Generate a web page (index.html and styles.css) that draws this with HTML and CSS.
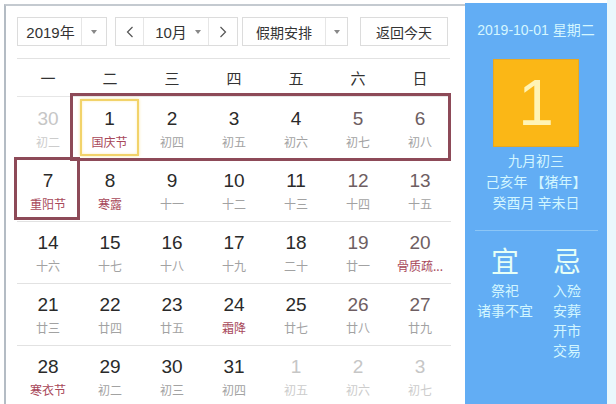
FILE: index.html
```html
<!DOCTYPE html>
<html lang="zh">
<head>
<meta charset="utf-8">
<link rel="stylesheet" href="styles.css">
</head>
<body>
<div class="page">
  <div class="left">
    <div class="toolbar">
      <div class="sel sel-year"><span class="sel-text">2019年</span><span class="sel-arrow"><i class="tri"></i></span></div>
      <div class="month">
        <span class="nav"><svg width="8" height="12" viewBox="0 0 8 12"><path d="M6.5 1 L1.5 6 L6.5 11" fill="none" stroke="#555" stroke-width="1.2"/></svg></span>
        <span class="month-text">10月<i class="tri"></i></span>
        <span class="nav"><svg width="8" height="12" viewBox="0 0 8 12"><path d="M1.5 1 L6.5 6 L1.5 11" fill="none" stroke="#555" stroke-width="1.2"/></svg></span>
      </div>
      <div class="sel sel-hol"><span class="sel-text">假期安排</span><span class="sel-arrow"><i class="tri"></i></span></div>
      <div class="btn">返回今天</div>
    </div>
    <div class="weekdays">
      <span>一</span><span>二</span><span>三</span><span>四</span><span>五</span><span>六</span><span>日</span>
    </div>
    <div class="grid">
      <div class="cell other"><b>30</b><em>初二</em></div>
      <div class="cell selected"><b>1</b><em class="fest">国庆节</em></div>
      <div class="cell"><b>2</b><em>初四</em></div>
      <div class="cell"><b>3</b><em>初五</em></div>
      <div class="cell"><b>4</b><em>初六</em></div>
      <div class="cell wk"><b>5</b><em>初七</em></div>
      <div class="cell wk"><b>6</b><em>初八</em></div>

      <div class="cell row"><b>7</b><em class="fest">重阳节</em></div>
      <div class="cell row"><b>8</b><em class="fest">寒露</em></div>
      <div class="cell row"><b>9</b><em>十一</em></div>
      <div class="cell row"><b>10</b><em>十二</em></div>
      <div class="cell row"><b>11</b><em>十三</em></div>
      <div class="cell row wk"><b>12</b><em>十四</em></div>
      <div class="cell row wk"><b>13</b><em>十五</em></div>

      <div class="cell row line"><b>14</b><em>十六</em></div>
      <div class="cell row line"><b>15</b><em>十七</em></div>
      <div class="cell row line"><b>16</b><em>十八</em></div>
      <div class="cell row line"><b>17</b><em>十九</em></div>
      <div class="cell row line"><b>18</b><em>二十</em></div>
      <div class="cell row line wk"><b>19</b><em>廿一</em></div>
      <div class="cell row line wk"><b>20</b><em class="fest">骨质疏...</em></div>

      <div class="cell row line"><b>21</b><em>廿三</em></div>
      <div class="cell row line"><b>22</b><em>廿四</em></div>
      <div class="cell row line"><b>23</b><em>廿五</em></div>
      <div class="cell row line"><b>24</b><em class="fest">霜降</em></div>
      <div class="cell row line"><b>25</b><em>廿七</em></div>
      <div class="cell row line wk"><b>26</b><em>廿八</em></div>
      <div class="cell row line wk"><b>27</b><em>廿九</em></div>

      <div class="cell row line"><b>28</b><em class="fest">寒衣节</em></div>
      <div class="cell row line"><b>29</b><em>初二</em></div>
      <div class="cell row line"><b>30</b><em>初三</em></div>
      <div class="cell row line"><b>31</b><em>初四</em></div>
      <div class="cell row line other"><b>1</b><em>初五</em></div>
      <div class="cell row line other"><b>2</b><em>初六</em></div>
      <div class="cell row line other"><b>3</b><em>初七</em></div>

      <div class="mark mark-week"></div>
      <div class="mark mark-day"></div>
    </div>
  </div>
  <div class="right">
    <div class="date">2019-10-01 星期二</div>
    <div class="big"><span>1</span></div>
    <div class="lunar">
      <div>九月初三</div>
      <div>己亥年 【猪年】</div>
      <div>癸酉月 辛未日</div>
    </div>
    <div class="sep"></div>
    <div class="yiji">
      <div class="col">
        <div class="head">宜</div>
        <div>祭祀</div>
        <div>诸事不宜</div>
      </div>
      <div class="col">
        <div class="head">忌</div>
        <div>入殓</div>
        <div>安葬</div>
        <div>开市</div>
        <div>交易</div>
      </div>
    </div>
  </div>
</div>
</body>
</html>
```

FILE: styles.css
```css
* { box-sizing: border-box; }
html, body { margin: 0; padding: 0; background: #fff; }
body {
  font-family: "Liberation Sans", "Noto Sans CJK SC", sans-serif;
  color: #333;
  overflow: hidden;
}
.page {
  display: flex;
  width: 616px;
  height: 404px;
  background: #fff;
}
.left {
  width: 461px;
  height: 400px;
  margin: 4px 0 0 4px;
  border-left: 2px solid #b4bcc4;
  border-top: 2px solid #c4cad0;
  padding: 11px 0 0 11px;
}
.toolbar {
  display: flex;
  height: 29px;
  width: 433px;
}
.sel, .month, .btn {
  border: 1px solid #dcdcdc;
  background: #fff;
  height: 29px;
  display: flex;
  align-items: stretch;
  font-size: 14px;
  color: #333;
}
.sel-text {
  display: flex;
  align-items: center;
  justify-content: center;
}
.sel-year .sel-text { font-size: 15px; }
.sel-arrow {
  display: flex;
  align-items: center;
  justify-content: center;
  border-left: 1px solid #e6e6e6;
  flex: 1;
}
.tri {
  display: inline-block;
  width: 0;
  height: 0;
  border-left: 3.5px solid transparent;
  border-right: 3.5px solid transparent;
  border-top: 4px solid #888;
}
.sel-year { width: 90px; }
.sel-year .sel-text { width: 63px; padding-left: 2px; }
.month { width: 123px; margin-left: 8px; }
.nav {
  width: 27px;
  display: flex;
  align-items: center;
  justify-content: center;
}
.month-text {
  width: 66px;
  display: flex;
  align-items: center;
  justify-content: center;
  gap: 8px;
  border-left: 1px solid #e6e6e6;
  border-right: 1px solid #e6e6e6;
  padding-left: 4px;
  font-size: 15px;
}
.nav:last-child { flex: 1; }
.sel-hol { width: 106px; margin-left: 4px; }
.sel-hol .sel-text { width: 82px; }
.btn {
  width: 88px;
  margin-left: 12px;
  align-items: center;
  justify-content: center;
}
.weekdays {
  margin-top: 12px;
  width: 433px;
  border-top: 1px solid #e2e2e2;
  height: 38px;
  display: grid;
  grid-template-columns: repeat(7, 62px);
  align-items: center;
  justify-items: center;
  font-size: 15px;
  color: #333;
  font-family: "Noto Sans CJK SC", sans-serif;
}
.grid {
  position: relative;
  width: 434px;
  display: grid;
  grid-template-columns: repeat(7, 62px);
  grid-auto-rows: 62px;
  border-top: 1px solid #e6e6e6;
}
.cell {
  display: flex;
  flex-direction: column;
  align-items: center;
  padding-top: 10px;
}
.cell.line { border-top: 1px solid #e2e2e2; padding-top: 9px; }
.cell b {
  font-weight: normal;
  font-size: 19px;
  line-height: 24px;
  color: #2a2a2a;
}
.cell em {
  font-style: normal;
  font-size: 12px;
  line-height: 18px;
  margin-top: 2px;
  color: #a2a2a2;
  font-family: "Noto Sans CJK SC", sans-serif;
  white-space: nowrap;
}
.cell em.fest { color: #a8485a; }
.cell.wk b { color: #6e5e62; }
.cell.other b { color: #c6c6c6; }
.cell.other em { color: #cccccc; }
.cell.selected {
  margin: 2px 2px 3px 1px;
  border: 2px solid #f2d36a;
  box-shadow: 0 0 3px #f8e7a8, inset 0 0 3px #fbeec0;
  padding-top: 6px;
}
.mark {
  position: absolute;
  border: 3px solid #8d4a58;
  pointer-events: none;
}
.mark-week {
  left: 53px;
  top: -4px;
  width: 381px;
  height: 68px;
}
.mark-day {
  left: -3px;
  top: 60px;
  width: 66px;
  height: 63px;
}
.right {
  width: 142px;
  height: 401px;
  margin-top: 3px;
  background: #62adf4;
  display: flex;
  flex-direction: column;
  align-items: center;
  color: #d2f6ff;
  font-family: "Noto Sans CJK SC", sans-serif;
}
.page::after {
  content: "";
  flex: 1;
  background: #eaf8fc;
}
.date {
  margin-top: 18px;
  font-size: 14px;
  line-height: 18px;
  font-family: "Liberation Sans", "Noto Sans CJK SC", sans-serif;
  color: #d4f6ff;
  white-space: nowrap;
}
.big {
  margin-top: 20px;
  width: 86px;
  height: 88px;
  background: #fbb716;
  border: 1px solid #e9a820;
  display: flex;
  align-items: center;
  justify-content: center;
}
.big span {
  font-family: "Liberation Sans", sans-serif;
  font-size: 64px;
  line-height: 1;
  color: #fff4b6;
}
.lunar {
  margin-top: 3px;
  font-size: 14px;
  line-height: 21px;
  text-align: center;
  white-space: nowrap;
}
.sep {
  margin-top: 17px;
  width: 123px;
  border-top: 1px solid #8cc6f6;
}
.yiji {
  margin-top: 12px;
  display: flex;
  width: 124px;
}
.col {
  width: 62px;
  display: flex;
  flex-direction: column;
  align-items: center;
  font-size: 14px;
  line-height: 20px;
  white-space: nowrap;
}
.col .head {
  font-size: 28px;
  line-height: 34px;
  color: #e6fff6;
  margin-bottom: 3px;
}
```
